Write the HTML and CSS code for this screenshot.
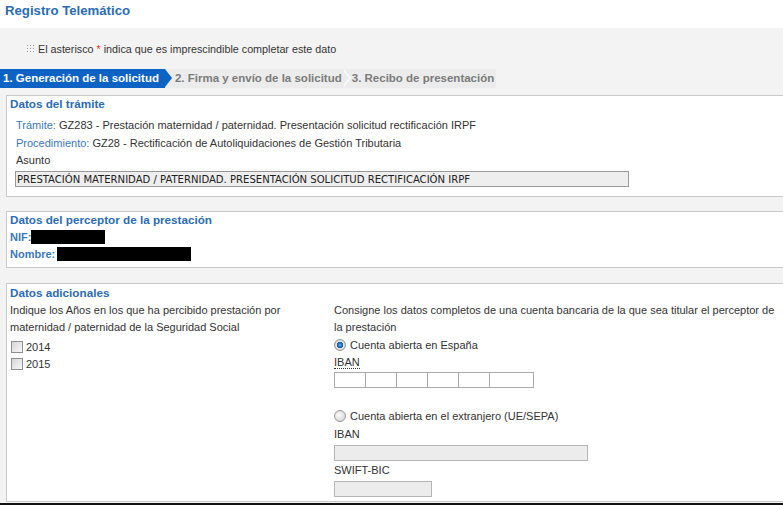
FILE: index.html
```html
<!DOCTYPE html>
<html lang="es">
<head>
  <meta charset="UTF-8">
  <title>Registro Telemático</title>
  <link rel="stylesheet" href="styles.css">
</head>
<body>
  <!-- cabecera -->
  <div class="title">Registro Telemático</div>

  <div class="panel">
    <p class="note">
      <svg class="note-icon" width="7" height="7" viewBox="0 0 7 7">
        <rect x="0" y="0" width="1" height="1"/><rect x="3" y="0" width="1" height="1"/><rect x="6" y="0" width="1" height="1"/>
        <rect x="0" y="3" width="1" height="1"/><rect x="3" y="3" width="1" height="1"/><rect x="6" y="3" width="1" height="1"/>
        <rect x="0" y="6" width="1" height="1"/><rect x="3" y="6" width="1" height="1"/><rect x="6" y="6" width="1" height="1"/>
      </svg>
      El asterisco <span class="req">*</span> indica que es imprescindible completar este dato
    </p>

    <!-- pasos -->
    <div class="steps">
      <div class="step step-active">1. Generación de la solicitud</div>
      <div class="step step-mid">2. Firma y envío de la solicitud</div>
      <div class="step step-last">3. Recibo de presentación</div>
    </div>

    <!-- datos del tramite -->
    <div class="box box-tramite">
      <div class="legend">Datos del trámite</div>
      <div class="row"><span class="lbl">Trámite:</span> GZ283 - Prestación maternidad / paternidad. Presentación solicitud rectificación IRPF</div>
      <div class="row"><span class="lbl">Procedimiento:</span> GZ28 - Rectificación de Autoliquidaciones de Gestión Tributaria</div>
      <div class="row row-asunto">Asunto</div>
      <input class="asunto" type="text" readonly value="PRESTACIÓN MATERNIDAD / PATERNIDAD. PRESENTACIÓN SOLICITUD RECTIFICACIÓN IRPF">
    </div>

    <!-- perceptor -->
    <div class="box box-perceptor">
      <div class="legend">Datos del perceptor de la prestación</div>
      <div class="row-id"><span class="lbl-b">NIF:</span><span class="redact redact-nif"></span></div>
      <div class="row-id"><span class="lbl-b">Nombre:</span><span class="redact redact-nombre"></span></div>
    </div>

    <!-- adicionales -->
    <div class="box box-adicional">
      <div class="legend">Datos adicionales</div>
      <div class="cols">
        <div class="col-left">
          <p class="text">Indique los Años en los que ha percibido prestación por maternidad / paternidad de la Seguridad Social</p>
          <label class="check"><input type="checkbox"> 2014</label>
          <label class="check"><input type="checkbox"> 2015</label>
        </div>
        <div class="col-right">
          <p class="text">Consigne los datos completos de una cuenta bancaria de la que sea titular el perceptor de la prestación</p>
          <label class="radio"><input type="radio" name="cuenta" checked> Cuenta abierta en España</label>
          <div class="field-lbl"><abbr title="International Bank Account Number">IBAN</abbr></div>
          <div class="iban">
            <input type="text"><input type="text"><input type="text"><input type="text"><input type="text"><input type="text" class="iban-last">
          </div>
          <label class="radio radio-ext"><input type="radio" name="cuenta"> Cuenta abierta en el extranjero (UE/SEPA)</label>
          <div class="field-lbl">IBAN</div>
          <input type="text" class="off off-iban" disabled>
          <div class="field-lbl">SWIFT-BIC</div>
          <input type="text" class="off off-bic" disabled>
        </div>
      </div>
    </div>
  </div>
  <div class="bottom-edge"></div>
</body>
</html>
```

FILE: styles.css
```css
html, body {
  height: 505px;
  overflow: hidden;
}
body {
  margin: 0;
  font-family: "Liberation Sans", Arial, sans-serif;
  font-size: 11px;
  color: #333;
  background: #fff;
}
.title {
  height: 28px;
  padding: 3px 5px 0;
  box-sizing: border-box;
  color: #2b6cb3;
  font-size: 13.2px;
  font-weight: bold;
  line-height: 15px;
}
.panel {
  background: #f3f3f3;
  height: 475px;
  overflow: hidden;
}

/* nota del asterisco */
.note {
  margin: 0;
  padding: 15px 0 0 27px;
  line-height: 13px;
  height: 27px;
  box-sizing: border-box;
  font-size: 10.75px;
  color: #333;
}
.note-icon {
  fill: #999;
  margin-right: 1px;
  vertical-align: 1px;
}
.req {
  color: #e33;
}

/* pasos */
.steps {
  display: flex;
  height: 19px;
  margin-top: 14px;
}
.step {
  position: relative;
  background: #ececec;
  color: #7b7b7b;
  font-size: 11.5px;
  font-weight: bold;
  line-height: 19px;
  white-space: nowrap;
}
.step-active {
  background: #0d63c3;
  color: #fff;
  padding: 0 6px 0 3px;
  z-index: 3;
}
.step-active::after {
  content: "";
  position: absolute;
  left: 100%;
  top: 0;
  border-left: 7px solid #0d63c3;
  border-top: 9.5px solid transparent;
  border-bottom: 9.5px solid transparent;
}
.step-mid {
  padding: 0 2px 0 10px;
  z-index: 2;
}
.step-mid::before,
.step-mid::after {
  content: "";
  position: absolute;
  top: 0;
  border-top: 9.5px solid transparent;
  border-bottom: 9.5px solid transparent;
}
.step-mid::after {
  left: 100%;
  border-left: 7px solid #fafafa;
  z-index: 1;
}
.step-mid::before {
  left: calc(100% - 2px);
  border-left: 7px solid #ececec;
  z-index: 2;
}
.step-last {
  padding: 0 2px 0 8px;
  z-index: 1;
}

/* cajas */
.box {
  background: #fff;
  border: 1px solid #c9c9c9;
  margin: 7px -40px 0 6px;
  padding: 0 0 0 3px;
}
.legend {
  color: #2b6cb3;
  font-size: 11.7px;
  font-weight: bold;
  line-height: 16px;
}
.box-tramite {
  height: 100px;
}
.box-tramite .legend {
  margin-bottom: 4px;
}
.row {
  padding-left: 6px;
  line-height: 18px;
}
.row-asunto {
  line-height: 17px;
}
.lbl {
  color: #3b78b6;
}
.asunto {
  display: block;
  margin: 2px 0 0 5px;
  width: 614px;
  height: 16px;
  box-sizing: border-box;
  border: 1px solid #999;
  background: #eee;
  font-family: "DejaVu Sans Condensed", "Liberation Sans", sans-serif;
  font-size: 11.2px;
  line-height: normal;
  color: #222;
  padding: 0 1px;
  outline: none;
}

.box-perceptor {
  margin-top: 14px;
  height: 55px;
}
.row-id {
  display: flex;
  align-items: center;
  height: 17px;
}
.row-id + .row-id {
  height: 18px;
}
.lbl-b {
  color: #3b78b6;
  font-weight: bold;
}
.redact {
  display: inline-block;
  height: 14px;
  background: #000;
}
.redact-nif {
  width: 74px;
}
.redact-nombre {
  width: 134px;
  margin-left: 2px;
}

.box-adicional {
  margin-top: 15px;
  height: 217px;
}
.box-adicional .legend {
  padding-top: 1px;
}
.cols {
  display: grid;
  grid-template-columns: 324px 470px;
  padding-top: 1px;
}
.text {
  margin: 0;
  line-height: 17px;
}
.col-right .text {
  width: 448px;
}
.check {
  display: flex;
  align-items: center;
  gap: 3px;
  height: 17px;
  padding-left: 1px;
}
.check:first-of-type {
  margin-top: 2px;
}
.check input {
  appearance: none;
  margin: 0;
  width: 12px;
  height: 12px;
  border: 1px solid #8f8f8f;
  background: linear-gradient(135deg, #d6d6d6, #f8f8f8);
  box-sizing: border-box;
}
.radio {
  display: flex;
  align-items: center;
  gap: 4px;
  height: 17px;
}
.radio input {
  appearance: none;
  margin: 0;
  width: 12px;
  height: 12px;
  border-radius: 50%;
  border: 1px solid #999;
  background: radial-gradient(circle at 40% 40%, #fafafa, #cfcfcf);
  box-sizing: border-box;
}
.radio input:checked {
  background: radial-gradient(circle at 50% 50%, #5fb0ec 0, #2a76bf 1.8px, #1a5a98 3px, #f2f2f2 3.6px, #e2e2e2 4.3px, #bdbdbd 5.5px);
}
.radio-ext {
  margin-top: 19.5px;
}
.field-lbl {
  line-height: 19px;
  color: #333;
}
.field-lbl abbr {
  text-decoration: none;
  border-bottom: 1px dotted #333;
}
.iban {
  display: flex;
}
.iban input {
  width: 32px;
  height: 16px;
  box-sizing: border-box;
  border: 1px solid #aaa;
  margin: 0 0 0 -1px;
  padding: 0;
  background: #fff;
}
.iban input:first-child {
  margin-left: 0;
}
.iban .iban-last {
  width: 45px;
}
.off {
  display: block;
  height: 16px;
  box-sizing: border-box;
  border: 1px solid #b5b5b5;
  background: #ececec;
  margin: 1px 0 0;
}
.off-iban {
  width: 254px;
}
.off-bic {
  width: 98px;
}
.bottom-edge {
  height: 2px;
  background: #111;
}
```
